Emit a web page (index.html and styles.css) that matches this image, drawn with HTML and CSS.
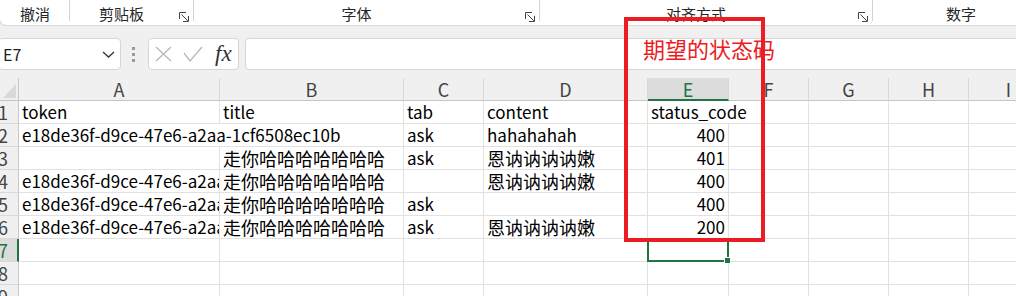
FILE: index.html
```html
<!DOCTYPE html>
<html lang="zh-CN">
<head>
  <meta charset="UTF-8">
  <title>状态码</title>
  <link rel="stylesheet" href="styles.css">
</head>
<body>
  <div class="ribbon">
    <div class="group g-undo"><span class="label">撤消</span></div>
    <div class="group g-clip">
      <span class="label">剪贴板</span>
      <svg class="launcher" viewBox="0 0 10 10"><path d="M0.5 7V0.5H7M2.5 2.5L8.8 8.8M4 9.5H9.5V4"/></svg>
    </div>
    <div class="group g-font">
      <span class="label">字体</span>
      <svg class="launcher" viewBox="0 0 10 10"><path d="M0.5 7V0.5H7M2.5 2.5L8.8 8.8M4 9.5H9.5V4"/></svg>
    </div>
    <div class="group g-align">
      <span class="label">对齐方式</span>
      <svg class="launcher" viewBox="0 0 10 10"><path d="M0.5 7V0.5H7M2.5 2.5L8.8 8.8M4 9.5H9.5V4"/></svg>
    </div>
    <div class="group g-num"><span class="label">数字</span></div>
  </div>

  <div class="formula-bar">
    <div class="name-box">
      <span>E7</span>
      <svg class="chevron" viewBox="0 0 13 7"><polyline points="1,1 6.5,6 12,1"/></svg>
    </div>
    <div class="grip"><i></i><i></i><i></i></div>
    <div class="fx-box">
      <svg class="icon-x" viewBox="0 0 17 16"><path d="M1 1L16 15M16 1L1 15"/></svg>
      <svg class="icon-ok" viewBox="0 0 20 16"><polyline points="1,7 7,15 19,1"/></svg>
      <span class="fx">fx</span>
    </div>
    <div class="formula-input"></div>
  </div>

  <div class="sheet">
    <div class="grid">
      <div class="corner"><svg viewBox="0 0 13 14"><polygon points="13,0 13,14 0,14"/></svg></div>
      <div class="ch">A</div><div class="ch">B</div><div class="ch">C</div><div class="ch">D</div>
      <div class="ch on">E</div><div class="ch">F</div><div class="ch">G</div><div class="ch">H</div><div class="ch">I</div>

      <div class="rh">1</div>
      <div class="c">token</div><div class="c">title</div><div class="c">tab</div><div class="c">content</div>
      <div class="c span2">status_code</div><div class="c"></div><div class="c"></div><div class="c"></div>

      <div class="rh">2</div>
      <div class="c span2">e18de36f-d9ce-47e6-a2aa-1cf6508ec10b</div><div class="c">ask</div><div class="c">hahahahah</div>
      <div class="c num">400</div><div class="c"></div><div class="c"></div><div class="c"></div><div class="c"></div>

      <div class="rh">3</div>
      <div class="c"></div><div class="c"><span class="zh">走你哈哈哈哈哈哈哈</span></div><div class="c">ask</div><div class="c"><span class="zh">恩讷讷讷讷嫩</span></div>
      <div class="c num">401</div><div class="c"></div><div class="c"></div><div class="c"></div><div class="c"></div>

      <div class="rh">4</div>
      <div class="c">e18de36f-d9ce-47e6-a2aa-1cf6508ec10b</div><div class="c"><span class="zh">走你哈哈哈哈哈哈哈</span></div><div class="c"></div><div class="c"><span class="zh">恩讷讷讷讷嫩</span></div>
      <div class="c num">400</div><div class="c"></div><div class="c"></div><div class="c"></div><div class="c"></div>

      <div class="rh">5</div>
      <div class="c">e18de36f-d9ce-47e6-a2aa-1cf6508ec10b</div><div class="c"><span class="zh">走你哈哈哈哈哈哈哈</span></div><div class="c">ask</div><div class="c"></div>
      <div class="c num">400</div><div class="c"></div><div class="c"></div><div class="c"></div><div class="c"></div>

      <div class="rh">6</div>
      <div class="c">e18de36f-d9ce-47e6-a2aa-1cf6508ec10b</div><div class="c"><span class="zh">走你哈哈哈哈哈哈哈</span></div><div class="c">ask</div><div class="c"><span class="zh">恩讷讷讷讷嫩</span></div>
      <div class="c num">200</div><div class="c"></div><div class="c"></div><div class="c"></div><div class="c"></div>

      <div class="rh on">7</div>
      <div class="c"></div><div class="c"></div><div class="c"></div><div class="c"></div>
      <div class="c active"><div class="selection"><i class="handle"></i></div></div><div class="c"></div><div class="c"></div><div class="c"></div><div class="c"></div>

      <div class="rh">8</div>
      <div class="c"></div><div class="c"></div><div class="c"></div><div class="c"></div>
      <div class="c"></div><div class="c"></div><div class="c"></div><div class="c"></div><div class="c"></div>

      <div class="rh">9</div>
      <div class="c"></div><div class="c"></div><div class="c"></div><div class="c"></div>
      <div class="c"></div><div class="c"></div><div class="c"></div><div class="c"></div><div class="c"></div>
    </div>
  </div>

  <!-- annotation drawn over the sheet -->
  <div class="callout"><span>期望的状态码</span></div>
</body>
</html>
```

FILE: styles.css
```css
* {
  box-sizing: border-box;
}

body {
  margin: 0;
  width: 1016px;
  height: 296px;
  overflow: hidden;
  position: relative;
  background: #f0f0f0;
  font-family: "Noto Sans CJK SC", "Noto Sans", sans-serif;
  color: #000;
}

/* ribbon group labels */
.ribbon {
  display: flex;
  height: 26px;
  margin-left: -1px;
  background: #fff;
  border-left: 1px solid #d8d8d8;
  border-bottom: 1px solid #d8d8d8;
  border-bottom-left-radius: 7px;
}

.group {
  display: flex;
  flex: none;
  height: 21px;
  padding-top: 4px;
  border-right: 1px solid #d4d4d4;
}

.group .label {
  flex: 1;
  text-align: center;
  font-size: 15px;
  line-height: 20px;
  color: #262626;
}

.launcher {
  width: 10px;
  height: 10px;
  margin: 8px 4px 0 6px;
  fill: none;
  stroke: #444;
  stroke-width: 1;
}

.g-undo { width: 70px; }
.g-undo .label { text-align: left; padding-left: 20px; }
.g-clip { width: 124px; }
.g-font { width: 346px; }
.g-align { width: 333px; }
.g-num { width: 176px; border-right: none; }

/* formula bar */
.formula-bar {
  display: flex;
  align-items: center;
  height: 32px;
  margin-top: 12px;
}

.name-box {
  display: flex;
  align-items: center;
  justify-content: space-between;
  width: 123px;
  height: 32px;
  margin-left: -2px;
  padding: 0 5px 0 4px;
  background: #fff;
  border: 1px solid #d6d6d6;
  border-radius: 4px;
  font-size: 16px;
  color: #222;
}

.chevron {
  width: 13px;
  height: 7px;
  fill: none;
  stroke: #333;
  stroke-width: 1.3;
}

.grip {
  display: flex;
  flex-direction: column;
  gap: 3px;
  width: 4px;
  margin: 0 12px 0 11px;
}

.grip i {
  width: 3px;
  height: 3px;
  background: #999;
}

.fx-box {
  display: flex;
  align-items: center;
  width: 91px;
  height: 32px;
  padding-left: 6px;
  background: #fff;
  border: 1px solid #d6d6d6;
  border-radius: 4px;
}

.icon-x {
  width: 17px;
  height: 16px;
  fill: none;
  stroke: #b8b8b8;
  stroke-width: 1.3;
}

.icon-ok {
  width: 20px;
  height: 16px;
  margin-left: 11px;
  fill: none;
  stroke: #b8b8b8;
  stroke-width: 1.3;
}

.fx {
  margin-left: 12px;
  font-family: "Liberation Serif", serif;
  font-style: italic;
  font-size: 23px;
  line-height: 24px;
  color: #333;
}

.formula-input {
  flex: 1;
  height: 32px;
  margin: 0 -6px 0 6px;
  background: #fff;
  border: 1px solid #d6d6d6;
  border-radius: 4px;
}

/* worksheet */
.sheet {
  padding-top: 8px;
}

.grid {
  display: grid;
  grid-template-columns: 19px 201px 184px 80px 164px 81px 80px 80px 80px 80px;
  grid-auto-rows: 23px;
  width: 1049px;
  font-size: 18px;
  line-height: 22px;
}

.corner {
  display: flex;
  align-items: flex-end;
  justify-content: flex-end;
  padding: 0 2px 2px 0;
  border-right: 1px solid #c8c8c8;
  border-bottom: 1px solid #c5c5c5;
}

.corner svg {
  width: 13px;
  height: 14px;
  fill: #d9d9d9;
}

.ch {
  text-align: center;
  color: #444;
  border-right: 1px solid #d8d8d8;
  border-bottom: 1px solid #c5c5c5;
}

.ch.on {
  background: #dcdcdc;
  color: #217346;
  border-bottom: 2px solid #217346;
}

.rh {
  display: flex;
  justify-content: flex-end;
  padding-right: 10px;
  overflow: hidden;
  color: #444;
  border-right: 1px solid #c8c8c8;
  border-bottom: 1px solid #d8d8d8;
}

.rh.on {
  background: #dcdcdc;
  color: #217346;
  border-right: 2px solid #217346;
  padding-right: 9px;
}

.c {
  padding: 0 3px;
  background: #fff;
  font-size: 17px;
  white-space: nowrap;
  overflow: hidden;
  border-right: 1px solid #e1e1e1;
  border-bottom: 1px solid #e1e1e1;
}

.c .zh {
  font-size: 18px;
}

.c.span2 {
  grid-column: span 2;
}

.c.num {
  text-align: right;
}

.c.active {
  position: relative;
  overflow: visible;
  z-index: 2;
}

.selection {
  position: absolute;
  left: -1px;
  top: -1px;
  right: -1px;
  bottom: -1px;
  border: 2px solid #217346;
}

.handle {
  position: absolute;
  right: -3px;
  bottom: -3px;
  width: 6px;
  height: 6px;
  background: #217346;
  border-left: 1px solid #fff;
  border-top: 1px solid #fff;
}

/* red annotation box */
.callout {
  position: absolute;
  left: 624px;
  top: 17px;
  width: 141px;
  height: 225px;
  padding: 13px 0 0 15px;
  border: 4px solid #ec1c24;
  z-index: 3;
  color: #ec1c24;
  font-size: 22px;
  line-height: 28px;
  white-space: nowrap;
}
```
